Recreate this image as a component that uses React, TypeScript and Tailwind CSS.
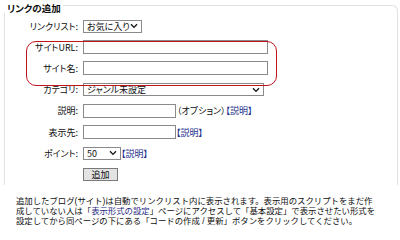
import React from "react";

const Chevron: React.FC = () => (
  <svg width="8" height="6" viewBox="0 0 8 6" className="shrink-0">
    <path d="M1 1.2 L4 4.4 L7 1.2" fill="none" stroke="#111" strokeWidth="1.3" />
  </svg>
);

const Row: React.FC<{ label: string; children: React.ReactNode }> = ({ label, children }) => (
  <div className="flex h-[21.2px] items-center">
    <div className="w-[73px] shrink-0 text-right">{label}</div>
    <div className="ml-[5px] flex items-center">{children}</div>
  </div>
);

const Input: React.FC<{ w: string }> = ({ w }) => (
  <div className={`${w} h-[14px] border border-[#8a8a8a] bg-white`} />
);

const Help: React.FC = () => <span className="text-[#23308c]">【説明】</span>;

const App: React.FC = () => {
  return (
    <div className="relative h-[227px] w-[400px] overflow-hidden bg-white font-['Noto_Sans_CJK_JP',sans-serif] text-[9px] leading-none text-[#0d0d0d] [font-feature-settings:'palt']">
      <div className="pt-[3px] pl-[4px] pr-[2px]">
        <div className="relative z-10 w-fit bg-white pl-[3px] pr-[2px] text-[9.5px] font-bold leading-[10px]">
          リンクの追加
        </div>
        <div className="-mt-[8.5px] h-[180px] rounded-tr-[6px] border-l border-r border-t border-[#e2e2e2] pt-[10px]">
          <Row label="リンクリスト:">
            <div className="flex h-[13px] w-[59px] items-center justify-between border border-[#8a8a8a] px-[3px]">
              <span>お気に入り</span>
              <Chevron />
            </div>
          </Row>
          <Row label="サイトURL:">
            <Input w="w-[185px]" />
          </Row>
          <Row label="サイト名:">
            <Input w="w-[185px]" />
          </Row>
          <Row label="カテゴリ:">
            <div className="flex h-[13px] w-[181px] items-center justify-between border border-[#8a8a8a] px-[3px]">
              <span>ジャンル未設定</span>
              <Chevron />
            </div>
          </Row>
          <Row label="説明:">
            <Input w="w-[93px]" />
            <span className="ml-[1px]">（オプション）</span>
            <Help />
          </Row>
          <Row label="表示先:">
            <Input w="w-[93px]" />
            <Help />
          </Row>
          <Row label="ポイント:">
            <div className="flex h-[13px] w-[38px] items-center justify-between border border-[#8a8a8a] px-[3px]">
              <span>50</span>
              <Chevron />
            </div>
            <Help />
          </Row>
          <div className="flex h-[21.2px] items-center pl-[78px]">
            <button className="flex h-[13px] w-[35px] items-center justify-center border border-[#7a7a7a] bg-[#e3e3e3]">
              追加
            </button>
          </div>
        </div>
      </div>
      <div className="mt-[11.5px] pl-[16px] font-['Liberation_Sans','Noto_Sans_CJK_JP',sans-serif] text-[8.4px] leading-[10px] [font-feature-settings:normal]">
        <p>追加したブログ(サイト)は自動でリンクリスト内に表示されます。表示用のスクリプトをまだ作</p>
        <p>
          成していない人は「<span className="text-[#1f2a80]">表示形式の設定</span>」ページにアクセスして「基本設定」で表示させたい形式を
        </p>
        <p>設定してから同ページの下にある「コードの作成 / 更新」ボタンをクリックしてください。</p>
      </div>
      <div className="absolute left-[26px] top-[41px] h-[45px] w-[251px] rounded-[10px] border-[1.5px] border-[#c0141e]" />
    </div>
  );
};

export default App;
